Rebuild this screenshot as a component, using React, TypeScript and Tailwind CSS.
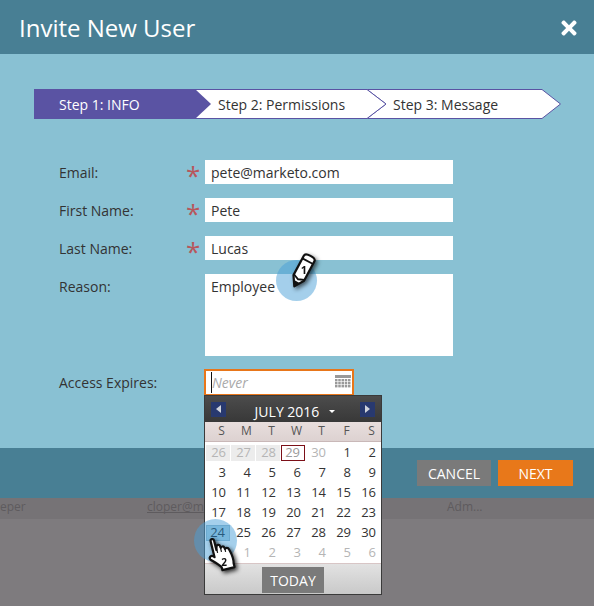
import { FaTimes } from 'react-icons/fa'

const FONT = "font-['Open_Sans',sans-serif]"

const FIELDS = [
  { label: 'Email:', value: 'pete@marketo.com' },
  { label: 'First Name:', value: 'Pete' },
  { label: 'Last Name:', value: 'Lucas' },
]

const WEEKDAYS = ['S', 'M', 'T', 'W', 'T', 'F', 'S']

// 'off' = other month, 'past' = disabled days before today, n 0 = slot hidden under the hand cursor
type Day = { n: number; kind?: 'past' | 'off' | 'today' | 'picked' }

const DAYS: Day[] = [
  { n: 26, kind: 'past' },
  { n: 27, kind: 'past' },
  { n: 28, kind: 'past' },
  { n: 29, kind: 'today' },
  { n: 30, kind: 'off' },
  ...Array.from({ length: 23 }, (_, i) => ({ n: i + 1 })),
  { n: 24, kind: 'picked' as const },
  ...[25, 26, 27, 28, 29, 30].map(n => ({ n })),
  { n: 0 },
  ...[1, 2, 3, 4, 5, 6].map(n => ({ n, kind: 'off' as const })),
]

function Stepper() {
  return (
    <div className="relative ml-[34px] h-[30px] w-[528px]">
      <svg viewBox="0 0 528 30" className="absolute inset-0 h-[30px] w-[528px]">
        <path d="M333 0.500H508L526.500 15L508 29.500H333L352 15Z" fill="#fff" stroke="#5a53a3" />
        <path d="M161 0.500H333L352 15L333 29.500H161Z" fill="#fff" stroke="#5a53a3" />
        <path d="M0 0H161L177 15L161 30H0Z" fill="#5a53a3" />
      </svg>
      <div className="relative flex h-[30px] items-center text-[14px]">
        <span className="ml-[25px] w-[159px] text-white">Step 1: INFO</span>
        <span className="w-[175px] text-[#333]">Step 2: Permissions</span>
        <span className="text-[#333]">Step 3: Message</span>
      </div>
    </div>
  )
}

function Calendar() {
  return (
    <div className="absolute left-[204px] top-[395px] flex h-[200px] w-[178px] flex-col border border-[#3a3a3a] bg-white">
      <div className="flex h-[26px] items-center justify-between bg-gradient-to-b from-[#4c4c4c] to-[#383838] px-[6px]">
        <div className="flex h-[15px] w-[15px] items-center justify-center bg-[#28396f]">
          <div className="h-0 w-0 border-y-[4px] border-r-[5px] border-y-transparent border-r-[#cfd3dc]" />
        </div>
        <div className="mt-[5px] ml-[4px] flex items-center gap-[10px] text-[14px] text-white">
          <span>JULY 2016</span>
          <div className="h-0 w-0 border-x-[3px] border-t-[3px] border-x-transparent border-t-white" />
        </div>
        <div className="flex h-[15px] w-[15px] items-center justify-center bg-[#28396f]">
          <div className="h-0 w-0 border-y-[4px] border-l-[5px] border-y-transparent border-l-[#cfd3dc]" />
        </div>
      </div>
      <div className="grid h-[20px] grid-cols-[repeat(7,25px)] items-center border-b border-[#c9b8b8] bg-gradient-to-b from-[#e8dedd] to-[#ddd2d1] pl-[4px] text-[12px] text-[#555]">
        {WEEKDAYS.map((d, i) => (
          <span key={i} className="text-center leading-none">{d}</span>
        ))}
      </div>
      <div className="grid flex-1 grid-cols-[repeat(7,25px)] auto-rows-[20px] content-start pl-[1px] pt-[1px] text-[13px]">
        {DAYS.map((d, i) => (
          <div key={i} className="flex h-[20px] items-center">
            <div
              className={
                'box-border flex h-[16px] w-[24px] items-center justify-end pr-[4px] leading-none ' +
                (d.kind === 'past'
                  ? 'bg-[#ececec] text-[#b5b5b5]'
                  : d.kind === 'off'
                    ? 'text-[#b5b5b5]'
                    : d.kind === 'today'
                      ? 'border border-[#7c1018] text-[#9a9a9a]'
                      : d.kind === 'picked'
                        ? 'border border-[#8fb4c8] bg-[#a9cfe0] text-[#071420]'
                        : 'text-[#333]')
              }
            >
              {d.n > 0 && d.n}
            </div>
          </div>
        ))}
      </div>
      <div className="flex h-[32px] items-end justify-center border-t border-[#d8c6c6] bg-gradient-to-b from-[#e2e2e2] to-[#c9c9c9] pb-[1px]">
        <div className="flex h-[26px] w-[62px] items-center justify-center bg-[#7a7a7a] text-[14px] text-white">TODAY</div>
      </div>
    </div>
  )
}

function Spotlight({ className }: { className: string }) {
  return <div className={'absolute rounded-full bg-[#4a9fd8]/50 ' + className} />
}

function PencilCursor() {
  return (
    <svg viewBox="0 0 26 40" className="absolute left-[290px] top-[250px] h-[40px] w-[26px] drop-shadow-[2px_2px_2px_rgba(0,0,0,0.6)]">
      <g transform="rotate(28 13 20)">
        <path d="M7 7V29L13 38.500L19 29V7C19 3 7 3 7 7Z" fill="#fff" stroke="#111" strokeWidth="2.200" strokeLinejoin="round" />
        <path d="M7 10H19M7 28L13 30.500L19 28" stroke="#111" strokeWidth="1.800" fill="none" />
        <path d="M10 33L13 38.500L16 33Z" fill="#111" />
      </g>
      <text x="14" y="24" textAnchor="middle" fontSize="11" fontWeight="700" fill="#111" fontFamily="Open Sans">1</text>
    </svg>
  )
}

function HandCursor() {
  return (
    <svg viewBox="0 0 32 38" className="absolute left-[206px] top-[535px] h-[38px] w-[32px] drop-shadow-[2px_2px_2px_rgba(0,0,0,0.8)]">
      <g transform="rotate(-14 15 19)">
        <path
          d="M8 4C8 1.800 11.500 1.800 11.500 4V14L12.500 10.500C13 9 15.800 9 16 11L16.300 13C17 11.500 19.600 11.800 19.800 13.600L20 15C21 13.800 23.500 14.200 23.800 16C25 21 26.500 25 25 31V35H12.500V32C10 28 6.500 25 3.500 22C2 20 4.500 17.500 6.500 19L8 20.500Z"
          fill="#fff"
          stroke="#111"
          strokeWidth="2.200"
          strokeLinejoin="round"
        />
        <path d="M12 13V17M16 12V17M20 15V18" stroke="#111" strokeWidth="1.200" />
      </g>
      <text x="18" y="31" textAnchor="middle" fontSize="10" fontWeight="700" fill="#111" fontFamily="Open Sans">2</text>
    </svg>
  )
}

export default function App() {
  return (
    <div className={'relative flex h-[606px] w-[594px] flex-col overflow-hidden bg-[#7e7b7e] ' + FONT}>
      <header className="flex h-[54px] items-center justify-between bg-[#487f94] pl-[19px] pr-[14px] pt-[2px]">
        <h1 className="text-[24px] text-white">Invite New User</h1>
        <FaTimes className="text-white" size={22} />
      </header>

      <main className="flex h-[394px] flex-col bg-[#89c1d3] pt-[35px]">
        <Stepper />
        <form className="mt-[41px] flex flex-col gap-[14px] pl-[59px] text-[14px] text-[#333]">
          {FIELDS.map(f => (
            <div key={f.label} className="flex h-[24px] items-center">
              <label className="w-[127px]">{f.label}</label>
              <span className="h-[24px] w-[19px] text-[26px] leading-[30px] text-[#b8565c]">*</span>
              <input readOnly value={f.value} className="h-[24px] w-[248px] bg-white px-[6px] outline-none" />
            </div>
          ))}
          <div className="flex items-start">
            <label className="w-[146px] leading-[26px]">Reason:</label>
            <textarea readOnly value="Employee" className="h-[82px] w-[248px] resize-none bg-white px-[6px] py-[2px] leading-[22px] outline-none" />
          </div>
          <div className="-mt-[1px] flex h-[26px] items-center">
            <label className="w-[145px]">Access Expires:</label>
            <div className="flex h-[27px] w-[150px] items-center justify-between border-2 border-[#e8761a] bg-white pl-[5px] pr-[1px]">
              <span className="border-l border-[#111] italic text-[#aaa]">Never</span>
              <svg viewBox="0 0 16 14" className="h-[14px] w-[16px]" fill="#999">
                <rect width="16" height="3" />
                {[4, 7, 10].map(y =>
                  [0, 3.25, 6.500, 9.750, 13].map(x => <rect key={`${x}-${y}`} x={x} y={y} width="2.500" height="2.400" />),
                )}
              </svg>
            </div>
          </div>
        </form>
      </main>

      <footer className="flex h-[50px] items-start justify-end gap-[7px] bg-[#487f94] pr-[21px] pt-[12px] text-[14px] text-white">
        <button className="h-[26px] w-[74px] bg-[#7a7a7a]">CANCEL</button>
        <button className="h-[26px] w-[75px] bg-[#e8781a]">NEXT</button>
      </footer>

      <div className="flex h-[21px] items-start bg-[#767376] text-[12px] leading-[18px] text-[#5e5b5e]">
        <span className="w-[147px]">eper</span>
        <span className="w-[300px] underline [text-decoration-skip-ink:none]">cloper@m</span>
        <span>Adm...</span>
      </div>

      <Calendar />
      <Spotlight className="left-[276px] top-[260px] h-[41px] w-[41px]" />
      <Spotlight className="left-[194px] top-[519px] h-[43px] w-[43px]" />
      <PencilCursor />
      <HandCursor />
    </div>
  )
}
